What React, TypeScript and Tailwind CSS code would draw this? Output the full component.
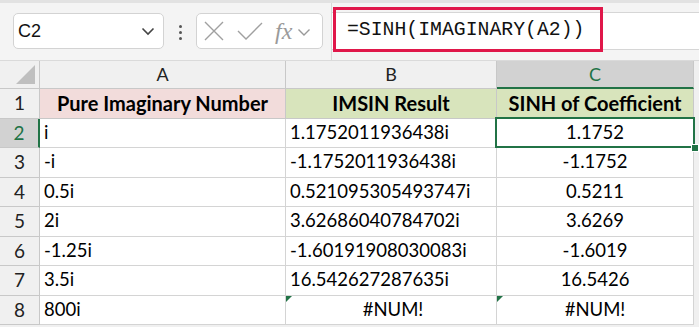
import React from "react";

const rows: { n: number; a: string; b: string; c: string; err?: boolean }[] = [
  { n: 2, a: "i", b: "1.1752011936438i", c: "1.1752" },
  { n: 3, a: "-i", b: "-1.1752011936438i", c: "-1.1752" },
  { n: 4, a: "0.5i", b: "0.521095305493747i", c: "0.5211" },
  { n: 5, a: "2i", b: "3.62686040784702i", c: "3.6269" },
  { n: 6, a: "-1.25i", b: "-1.60191908030083i", c: "-1.6019" },
  { n: 7, a: "3.5i", b: "16.542627287635i", c: "16.5426" },
  { n: 8, a: "800i", b: "#NUM!", c: "#NUM!", err: true },
];

function Chevron() {
  return (
    <svg width="14" height="9" viewBox="0 0 14 9" fill="none">
      <path d="M1.5 1.5 L7 7 L12.5 1.5" stroke="#444" strokeWidth="1.6" />
    </svg>
  );
}

function Tri() {
  return (
    <div className="absolute left-0 top-0 w-0 h-0 border-t-[6px] border-t-[#217346] border-r-[6px] border-r-transparent" />
  );
}

export default function App() {
  return (
    <div className="w-[699px] h-[327px] overflow-hidden bg-[#f0f0f0] font-['Lato',sans-serif] text-black">
      <div className="h-[3px] bg-[#e2e2e2]" />
      <div className="h-[58px] flex bg-[#f4f4f4] border-b border-[#dadada]">
        <div className="ml-[13px] mt-[10px] w-[151px] h-[36px] bg-white border border-[#d3d3d3] rounded-[5px] flex items-center justify-between pl-[4px] pr-[8px]">
          <span className="text-[18px] font-['Liberation_Sans',sans-serif] text-[#111]">C2</span>
          <Chevron />
        </div>
        <div className="w-[32px] flex flex-col items-center justify-center gap-[3px] pt-[1px]">
          <div className="w-[3px] h-[3px] rounded-full bg-[#555]" />
          <div className="w-[3px] h-[3px] rounded-full bg-[#555]" />
          <div className="w-[3px] h-[3px] rounded-full bg-[#555]" />
        </div>
        <div className="mt-[10px] w-[127px] h-[36px] bg-white border border-[#d3d3d3] rounded-[5px] flex items-center pl-[6px]">
          <svg width="22" height="22" viewBox="0 0 22 22" fill="none">
            <path d="M2 2 L20 20 M20 2 L2 20" stroke="#a0a0a0" strokeWidth="1.4" />
          </svg>
          <svg width="26" height="20" viewBox="0 0 26 20" fill="none" className="ml-[12px]">
            <path d="M1 10 L9 18 L25 2" stroke="#a0a0a0" strokeWidth="1.4" />
          </svg>
          <span className="ml-[12px] text-[24px] italic font-['Liberation_Serif',serif] text-[#9a9a9a] leading-none">fx</span>
          <div className="ml-[5px] mt-[2px]"><svg width="14" height="9" viewBox="0 0 14 9" fill="none"><path d="M1.5 1.5 L7 7 L12.5 1.5" stroke="#999" strokeWidth="1.4" /></svg></div>
        </div>
        <div className="ml-[8px] flex-1 relative border-l border-[#d8d8d8]">
          <div className="mt-[9px] h-[38px] bg-white border-y border-[#d6d6d6] flex items-center pl-[15px]">
            <span className="font-['Liberation_Mono',monospace] text-[19.8px] text-[#111] leading-none">=SINH(IMAGINARY(A2))</span>
          </div>
          <div className="absolute left-[1px] top-[4px] w-[270px] h-[45px] border-[3px] border-[#e0174a]" />
        </div>
      </div>

      <div className="flex h-[28px] bg-[#f0f0f0] text-[18px] text-[#222]">
        <div className="w-[40px] border-r border-b border-[#c8c8c8] relative">
          <div className="absolute right-[4px] bottom-[4px] w-0 h-0 border-l-[19px] border-l-transparent border-b-[19px] border-b-[#bfbfbf]" />
        </div>
        <div className="w-[246px] border-r border-b border-[#c8c8c8] flex items-center justify-center">A</div>
        <div className="w-[211px] border-r border-b border-[#c8c8c8] flex items-center justify-center">B</div>
        <div className="w-[197px] bg-[#d2d2d2] border-r border-[#c8c8c8] border-b-2 border-b-[#217346] text-[#217346] flex items-center justify-center">C</div>
      </div>

      <div className="flex h-[29.5px] text-[20px] font-bold">
        <div className="w-[40px] bg-[#f0f0f0] border-r border-b border-[#c8c8c8] flex items-center justify-center font-normal text-[19px] text-[#222]">1</div>
        <div className="w-[246px] bg-[#f2dcdb] border-r border-b border-[#c8c8c8] flex items-center justify-center">Pure Imaginary Number</div>
        <div className="w-[211px] bg-[#d8e4bc] border-r border-b border-[#c8c8c8] flex items-center justify-center">IMSIN Result</div>
        <div className="w-[197px] bg-[#d8e4bc] border-r border-b border-[#c8c8c8] flex items-center justify-center">SINH of Coefficient</div>
      </div>

      {rows.map((r) => {
        const sel = r.n === 2;
        return (
          <div key={r.n} className="flex h-[29.5px] text-[18.5px]">
            <div
              className={
                sel
                  ? "w-[40px] bg-[#d2d2d2] border-r-2 border-r-[#217346] border-b border-b-[#c8c8c8] flex items-center justify-center text-[19px] text-[#217346]"
                  : "w-[40px] bg-[#f0f0f0] border-r border-b border-[#c8c8c8] flex items-center justify-center text-[19px] text-[#222]"
              }
            >
              {r.n}
            </div>
            <div className="w-[246px] bg-white border-r border-b border-[#d4d4d4] flex items-center pl-[4px]">{r.a}</div>
            <div className={"relative w-[211px] bg-white border-r border-b border-[#d4d4d4] flex items-center pl-[4px] " + (r.err ? "justify-center" : "")}>
              {r.err && <Tri />}
              {r.b}
            </div>
            <div className="relative w-[197px] bg-white border-r border-b border-[#d4d4d4] flex items-center justify-center">
              {r.err && <Tri />}
              {sel && <div className="absolute left-[-2px] top-[-2px] right-[-2px] bottom-[-1px] border-2 border-[#217346]" />}
              {sel && <div className="absolute right-[-6px] bottom-[-5px] w-[8px] h-[8px] bg-[#217346] border border-white z-10" />}
              {r.c}
            </div>
          </div>
        );
      })}
    </div>
  );
}
